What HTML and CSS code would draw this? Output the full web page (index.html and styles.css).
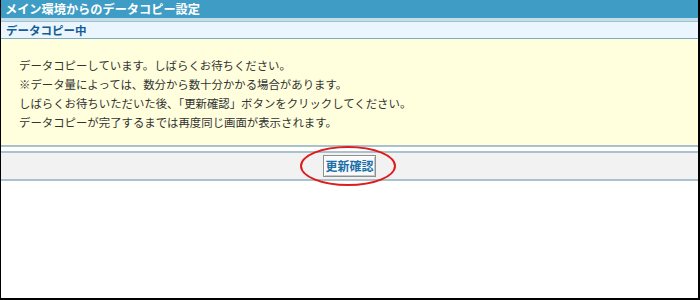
FILE: index.html
```html
<!DOCTYPE html>
<html lang="ja">
<head>
  <meta charset="utf-8">
  <title>メイン環境からのデータコピー設定</title>
  <link rel="stylesheet" href="styles.css">
</head>
<body>
  <div id="frame">
    <h1 class="title">メイン環境からのデータコピー設定</h1>
    <h2 class="subtitle">データコピー中</h2>

    <div class="message">
      <p>データコピーしています。しばらくお待ちください。</p>
      <p>※データ量によっては、数分から数十分かかる場合があります。</p>
      <p>しばらくお待ちいただいた後、「更新確認」ボタンをクリックしてください。</p>
      <p>データコピーが完了するまでは再度同じ画面が表示されます。</p>
    </div>

    <div class="button-bar">
      <span class="button-wrap">
        <button class="refresh">更新確認</button>
        <span class="mark"></span>
      </span>
    </div>
  </div>
</body>
</html>
```

FILE: styles.css
```css
    body {
      margin: 0;
      font-family: "Noto Sans CJK JP", "Noto Sans", sans-serif;
    }

    #frame {
      box-sizing: border-box;
      width: 700px;
      height: 300px;
      border-left: 1px solid #000000;
      border-right: 2px solid #000000;
      border-bottom: 2px solid #000000;
      background: #ffffff;
    }

    .title {
      margin: 0;
      height: 18px;
      padding-left: 4px;
      background: #3f9dc5;
      border-bottom: 3px solid #c6dde8;
      color: #ffffff;
      font-size: 12.2px;
      font-weight: bold;
      line-height: 18px;
    }
    .subtitle {
      margin: 0;
      height: 16px;
      padding-left: 5px;
      background: #eaf5fd;
      border-top: 1px solid #9ec3d6;
      border-bottom: 1px solid #7aaac4;
      color: #135c96;
      font-size: 11.5px;
      font-weight: bold;
      line-height: 16px;
    }

    .message {
      padding: 17px 18px 13px;
      background: #ffffdd;
      border-bottom: 2px solid #a9c2ce;
      color: #333333;
      font-size: 11.4px;
    }
    .message p {
      margin: 0;
      line-height: 19px;
    }

    .button-bar {
      display: flex;
      justify-content: center;
      align-items: center;
      height: 26px;
      margin-top: 4px;
      background: #f2f2f2;
      border-top: 2px solid #a9c2ce;
      border-bottom: 2px solid #a9c2ce;
    }
    .button-wrap {
      position: relative;
      display: inline-block;
    }
    .refresh {
      display: block;
      height: 22px;
      padding: 0 1px;
      background: #fafafa;
      border: 1px solid #8f8f8f;
      box-shadow: inset 1px 1px 0 #ffffff, inset -1px -1px 0 #c8c8c8;
      color: #1a6fa8;
      font-family: inherit;
      font-size: 12px;
      font-weight: bold;
      line-height: 20px;
    }

    .mark {
      position: absolute;
      left: -23px;
      top: -9px;
      width: 92px;
      height: 36px;
      border: 2px solid #e01b1b;
      border-radius: 50%;
    }
```
